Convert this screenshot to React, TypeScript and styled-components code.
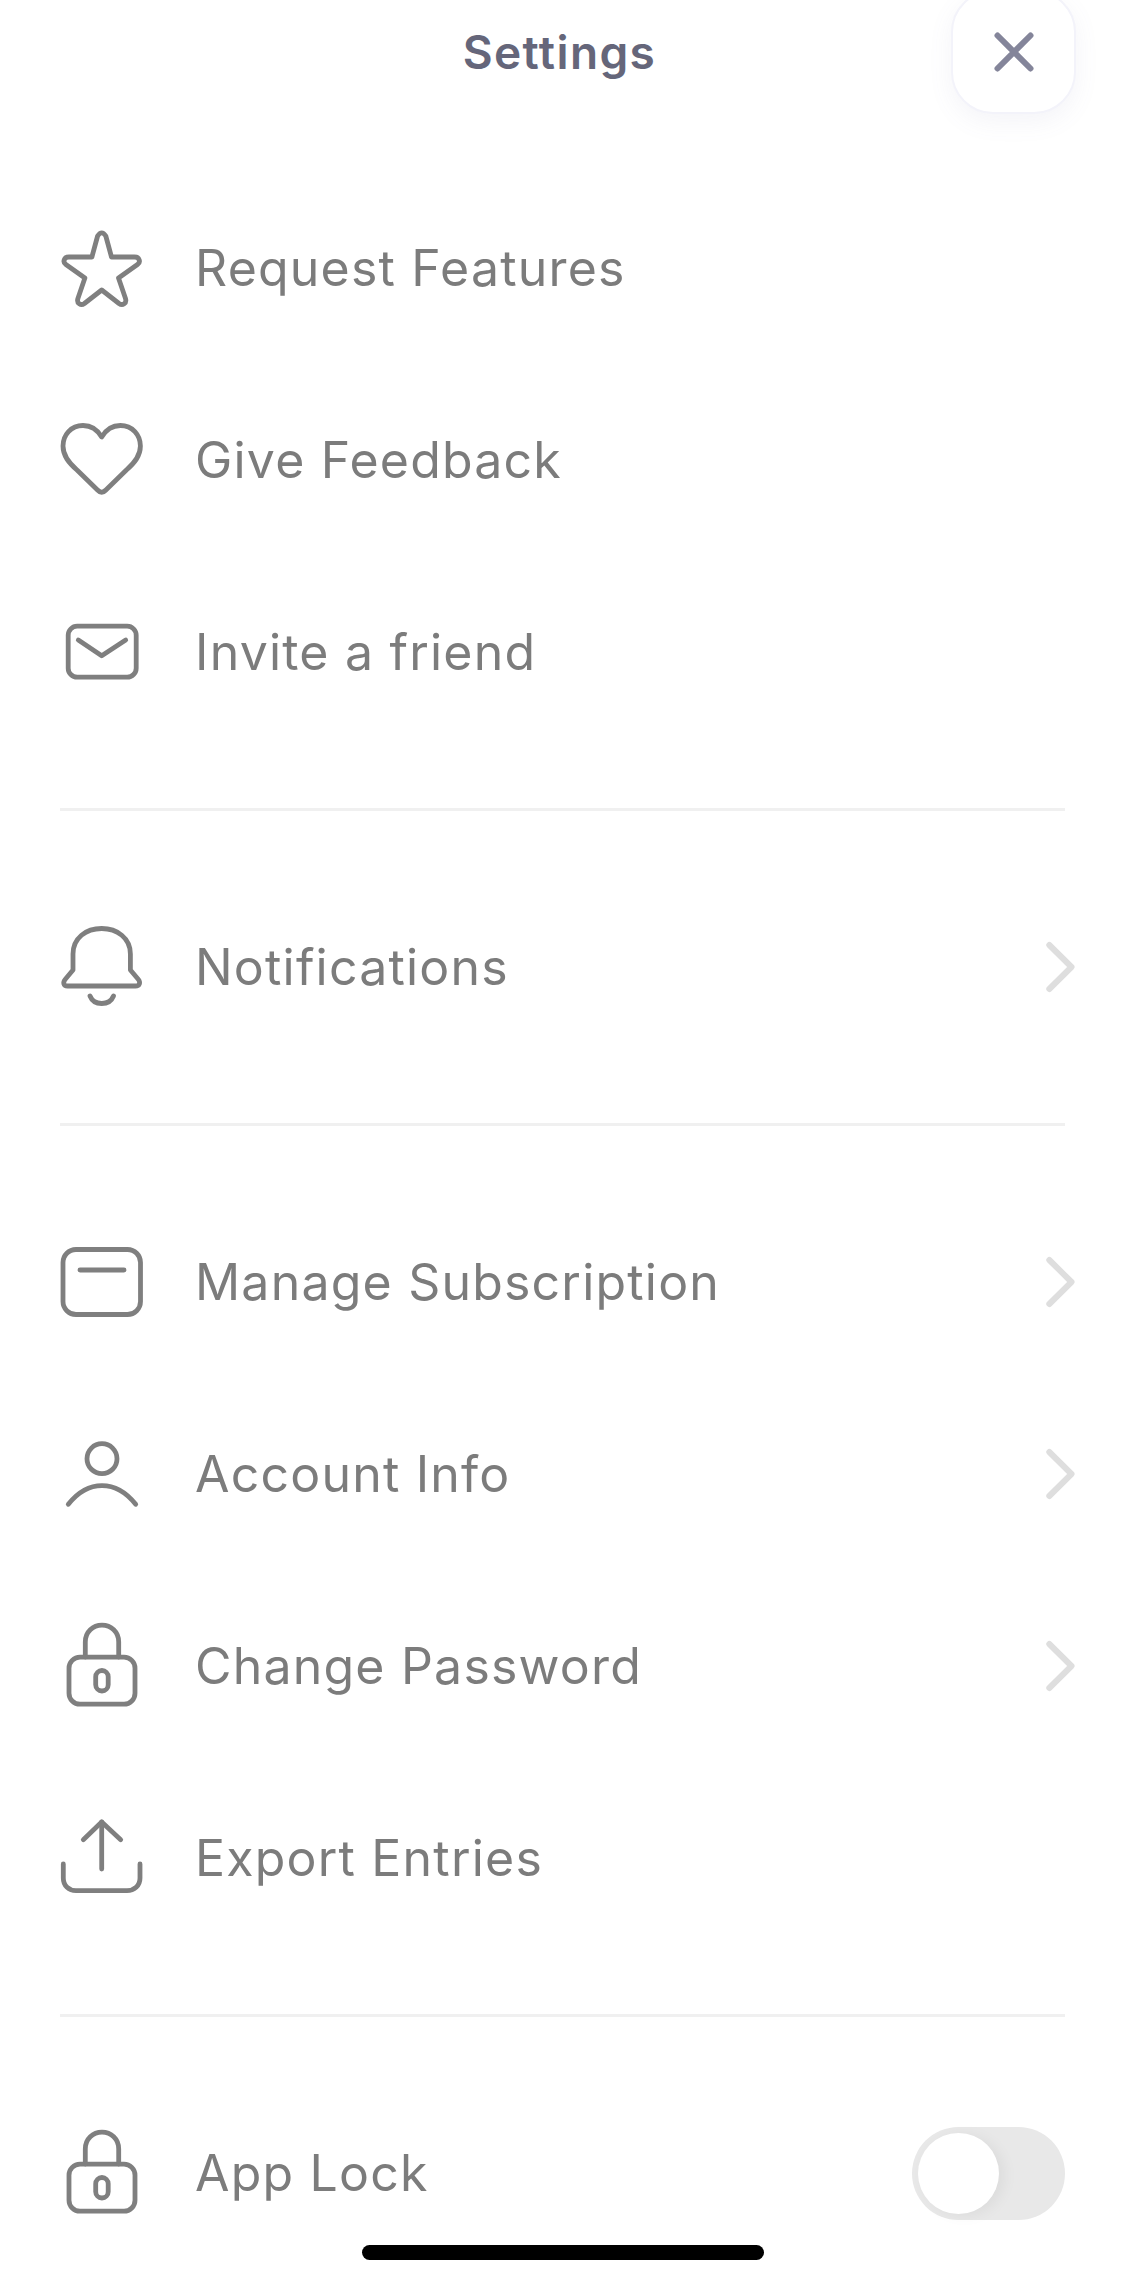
import { ReactNode } from 'react';
import styled, { createGlobalStyle } from 'styled-components';

const GlobalStyle = createGlobalStyle`
    html, body {
        margin: 0;
        padding: 0;
        background: #fff;
    }
    * {
        box-sizing: border-box;
    }
`;

const Icon = ({ children }: { children: ReactNode }) => (
    <S_IconSvg viewBox="0 0 84 84" fill="none" stroke="#7f7f7f" strokeWidth="4.8" strokeLinecap="round" strokeLinejoin="round">
        {children}
    </S_IconSvg>
);

const StarIcon = () => (
    <Icon>
        <path d="M37.6 10Q41.7 3.6 45.8 10L51.5 31H74.5C79.5 31 81 36 77.5 38.5L58.5 52L65.5 72.5C67 77.5 62.5 80 59 77.5L41.7 64L24.4 77.5C20.9 80 16.4 77.5 17.9 72.5L24.9 52L5.9 38.5C2.4 36 3.9 31 8.9 31H31.9Z" />
    </Icon>
);

const HeartIcon = () => (
    <Icon>
        <path d="M41.7 19C37 11 31 7.5 23 7.5C11 7.5 3 17 3 28C3 38 9 45 17 52L37.5 72Q41.7 76.5 45.9 72L66.4 52C74.4 45 80.4 38 80.4 28C80.4 17 72.4 7.5 60.4 7.5C52.4 7.5 46.4 11 41.7 19Z" />
    </Icon>
);

const MailIcon = () => (
    <Icon>
        <rect x="8.2" y="16.2" width="68" height="51" rx="9" />
        <path d="M18.3 30L41.7 45.7L65.7 30" />
    </Icon>
);

const BellIcon = () => (
    <Icon>
        <path d="M13 45V29C13 13 26 3.5 41.7 3.5C57 3.5 70.4 13 70.4 29V45L78 54C81 57.5 79.5 61 75.5 61H7.5C3.5 61 2.5 57.5 5.5 54L13 45Z" />
        <path d="M30 71C32 76 36 78.5 41.7 78.5C47 78.5 51.5 76 53.5 71" />
    </Icon>
);

const CardIcon = () => (
    <Icon>
        <rect x="3" y="9.5" width="77.5" height="65" rx="13" />
        <path d="M20 30H64" />
    </Icon>
);

const PersonIcon = () => (
    <Icon>
        <circle cx="42" cy="26.7" r="15" />
        <path d="M8.3 72.3C18 60 30 53.6 42 53.6C54 53.6 66 60 75.7 72.3" />
    </Icon>
);

const LockIcon = () => (
    <Icon>
        <rect x="9" y="33.2" width="66" height="47" rx="11" />
        <path d="M25.3 33V18C25.3 8 33 1.2 42 1.2C51 1.2 58.7 8 58.7 18V33" />
        <rect x="35.7" y="46.5" width="12.5" height="20.5" rx="6.25" />
    </Icon>
);

const ExportIcon = () => (
    <Icon>
        <path d="M23.3 23.7L41.7 6L60.7 23.7" />
        <path d="M41.7 6V53" />
        <path d="M3.3 48V62C3.3 70 9 74.7 16 74.7H67C74 74.7 80 70 80 62V48" />
    </Icon>
);

const Chevron = () => (
    <S_ChevronSvg viewBox="0 0 30 54" fill="none" stroke="#dedede" strokeWidth="6" strokeLinecap="round" strokeLinejoin="round">
        <path d="M4.3 5L26.5 27L4.3 49" />
    </S_ChevronSvg>
);

type Item = { label: string; icon: ReactNode; chevron?: boolean };

const groups: Item[][] = [
    [
        { label: 'Request Features', icon: <StarIcon /> },
        { label: 'Give Feedback', icon: <HeartIcon /> },
        { label: 'Invite a friend', icon: <MailIcon /> },
    ],
    [{ label: 'Notifications', icon: <BellIcon />, chevron: true }],
    [
        { label: 'Manage Subscription', icon: <CardIcon />, chevron: true },
        { label: 'Account Info', icon: <PersonIcon />, chevron: true },
        { label: 'Change Password', icon: <LockIcon />, chevron: true },
        { label: 'Export Entries', icon: <ExportIcon /> },
    ],
];

export default function App() {
    return (
        <S_Page>
            <GlobalStyle />
            <S_Header>
                <S_Title>Settings</S_Title>
                <S_CloseButton>
                    <svg width="46" height="46" viewBox="0 0 46 46" fill="none" stroke="#84859a" strokeWidth="6" strokeLinecap="round">
                        <path d="M6.5 6.5L39.5 39.5M39.5 6.5L6.5 39.5" />
                    </svg>
                </S_CloseButton>
            </S_Header>
            {groups.map((group) => (
                <div key={group[0].label}>
                    {group.map((item) => (
                        <S_Row key={item.label}>
                            {item.icon}
                            <S_Label>{item.label}</S_Label>
                            {item.chevron && <Chevron />}
                        </S_Row>
                    ))}
                    <S_Divider />
                </div>
            ))}
            <S_Row>
                <LockIcon />
                <S_Label>App Lock</S_Label>
                <S_Toggle>
                    <S_Knob />
                </S_Toggle>
            </S_Row>
            <S_HomeIndicator />
        </S_Page>
    );
}

const S_Page = styled.main`
    position: relative;
    width: 1125px;
    height: 2284px;
    overflow: hidden;
    background: #fff;
    font-family: 'Inter', 'Liberation Sans', sans-serif;
`;
const S_Header = styled.header`
    display: flex;
    justify-content: center;
    height: 172px;
    padding-top: 22px;
    padding-right: 6px;
`;
const S_Title = styled.h1`
    margin: 0;
    font-size: 46px;
    line-height: 60px;
    font-weight: 600;
    letter-spacing: 1.4px;
    color: #65667a;
`;
const S_CloseButton = styled.button`
    position: absolute;
    top: -10px;
    left: 951px;
    width: 125px;
    height: 124px;
    display: flex;
    align-items: center;
    justify-content: center;
    padding: 0;
    background: #fff;
    border: 2px solid #f3f3fa;
    border-radius: 42px;
    box-shadow: 0 8px 24px rgba(110, 110, 160, 0.08);
`;
const S_Row = styled.div`
    display: flex;
    align-items: center;
    height: 192px;
    padding-left: 60px;
    padding-right: 50px;
`;
const S_IconSvg = styled.svg`
    flex: none;
    width: 84px;
    height: 84px;
    overflow: visible;
`;
const S_Label = styled.span`
    flex: 1;
    margin-left: 51px;
    font-size: 50px;
    line-height: 60px;
    letter-spacing: 1.2px;
    color: #7c7c7c;
`;
const S_ChevronSvg = styled.svg`
    flex: none;
    width: 30px;
    height: 54px;
`;
const S_Divider = styled.hr`
    width: 1005px;
    height: 3px;
    margin: 60px 0 60px 60px;
    border: 0;
    background: #f0f0f0;
`;
const S_Toggle = styled.div`
    flex: none;
    width: 153px;
    height: 93px;
    margin-right: 10px;
    padding: 6px;
    border-radius: 47px;
    background: #e8e8e8;
`;
const S_Knob = styled.div`
    width: 81px;
    height: 81px;
    border-radius: 50%;
    background: #fff;
    box-shadow: 6px 2px 14px rgba(0, 0, 0, 0.05);
`;
const S_HomeIndicator = styled.div`
    position: absolute;
    left: 362px;
    top: 2245px;
    width: 402px;
    height: 15px;
    border-radius: 8px;
    background: #000;
`;
